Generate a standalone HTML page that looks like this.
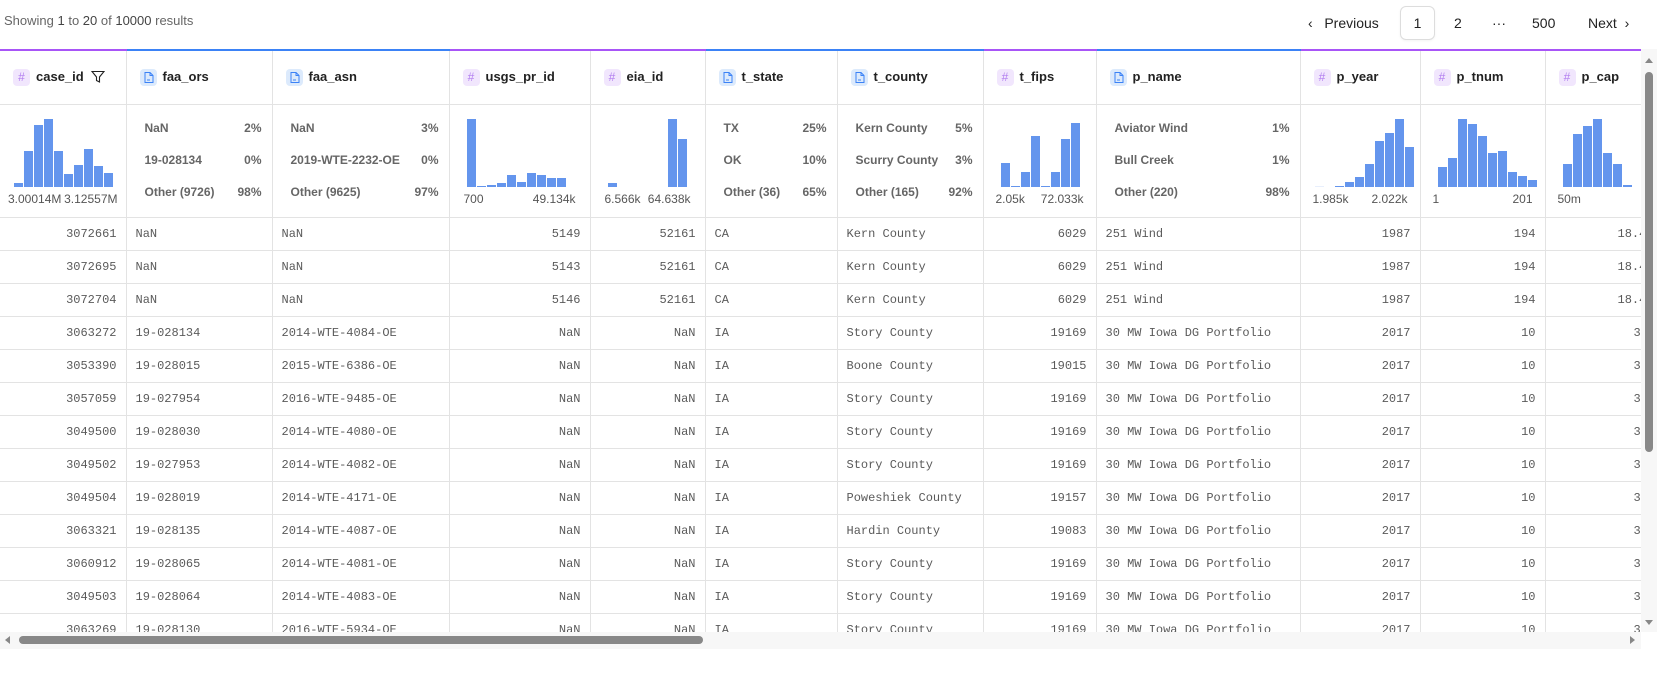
<!DOCTYPE html>
<html><head><meta charset="utf-8"><style>
*{box-sizing:border-box;margin:0;padding:0}
body{width:1657px;height:689px;background:#fff;font-family:"Liberation Sans",sans-serif;position:relative;overflow:hidden;color:#222}
.top{position:absolute;top:13px;left:4px;font-size:13px;color:#666}
.top b{color:#444;font-weight:normal}
.pg{position:absolute;top:0;font-size:14px;color:#222;line-height:46px}
.box{position:absolute;left:1400px;top:6px;width:35px;height:34px;border:1px solid #ddd;border-radius:6px;text-align:center;line-height:32px;font-size:14px;box-shadow:0 1px 2px rgba(0,0,0,.05)}
.wrap{position:absolute;left:0;top:49px;width:1641px;height:583px;overflow:hidden}
table{border-collapse:collapse;table-layout:fixed;width:1665px}
td,th{border-right:1px solid #e3e3e3;border-bottom:1px solid #e3e3e3;overflow:hidden;white-space:nowrap}
th{height:54px;text-align:left;font-size:13px;font-weight:bold;color:#222;padding-left:13px;border-top:2px solid #3b82f6}
th.n{border-top-color:#a855f7}
.ic{display:inline-block;width:17px;height:17px;border-radius:4px;vertical-align:middle;margin-right:6px;text-align:center;line-height:17px;font-size:12px;font-weight:normal}
.ic.h{background:#f1e6fd;color:#b27ef0}
.ic.d{background:#dceafc}
.st td{height:112px;vertical-align:top;position:relative;font-size:12px;font-weight:bold;color:#666}
.cat{padding:16px 10px 0 18px}
.cat div{display:flex;justify-content:space-between;height:32px}
.hist{position:absolute;left:14px;top:12px;height:70px;display:flex;align-items:flex-end;gap:1px}
.hist i{display:block;width:9px;background:#6495ed}
.lab{position:absolute;left:8px;right:8px;top:87px;display:flex;justify-content:space-between;font-weight:normal;color:#555;font-size:12px}
.r td{height:33px;font-family:"Liberation Mono",monospace;font-size:12px;color:#5a5a5a;padding:0 9px}
.r td.num{text-align:right}
.vs{position:absolute;left:1641px;top:49px;width:16px;height:583px;background:#f7f7f7}
.vt{position:absolute;left:1645px;top:72px;width:8px;height:380px;background:#888;border-radius:4px}
.hs{position:absolute;left:0;top:632px;width:1641px;height:17px;background:#f7f7f7}
.ht{position:absolute;left:19px;top:636px;width:684px;height:8px;background:#888;border-radius:4px}
.ar{position:absolute;width:0;height:0}
</style></head><body>
<div class="top">Showing <b>1</b> to <b>20</b> of <b>10000</b> results</div>
<div class="pg" style="left:1308px">‹&nbsp;&nbsp; Previous</div>
<div class="box">1</div>
<div class="pg" style="left:1454px">2</div>
<div class="pg" style="left:1492px">···</div>
<div class="pg" style="left:1532px">500</div>
<div class="pg" style="left:1588px">Next &nbsp;›</div>
<div class="wrap"><table>
<colgroup><col style="width:126px"><col style="width:146px"><col style="width:177px"><col style="width:141px"><col style="width:115px"><col style="width:132px"><col style="width:146px"><col style="width:113px"><col style="width:204px"><col style="width:120px"><col style="width:125px"><col style="width:120px"></colgroup>
<tr>
<th class="n"><span class="ic h">#</span>case_id &nbsp;<svg width="14" height="14" viewBox="0 0 14 14" style="vertical-align:middle"><path d="M1 1.5h12L8.5 7v5l-3-1.5V7z" fill="none" stroke="#222" stroke-width="1.1"/></svg></th>
<th><span class="ic d"><svg width="17" height="17" viewBox="0 0 17 17"><path d="M5 3.5h5l3 3v7H5z M10 3.5v3h3 M7 11h3" fill="none" stroke="#3b82f6" stroke-width="1"/></svg></span>faa_ors</th>
<th><span class="ic d"><svg width="17" height="17" viewBox="0 0 17 17"><path d="M5 3.5h5l3 3v7H5z M10 3.5v3h3 M7 11h3" fill="none" stroke="#3b82f6" stroke-width="1"/></svg></span>faa_asn</th>
<th class="n"><span class="ic h">#</span>usgs_pr_id</th>
<th class="n"><span class="ic h">#</span>eia_id</th>
<th><span class="ic d"><svg width="17" height="17" viewBox="0 0 17 17"><path d="M5 3.5h5l3 3v7H5z M10 3.5v3h3 M7 11h3" fill="none" stroke="#3b82f6" stroke-width="1"/></svg></span>t_state</th>
<th><span class="ic d"><svg width="17" height="17" viewBox="0 0 17 17"><path d="M5 3.5h5l3 3v7H5z M10 3.5v3h3 M7 11h3" fill="none" stroke="#3b82f6" stroke-width="1"/></svg></span>t_county</th>
<th class="n"><span class="ic h">#</span>t_fips</th>
<th><span class="ic d"><svg width="17" height="17" viewBox="0 0 17 17"><path d="M5 3.5h5l3 3v7H5z M10 3.5v3h3 M7 11h3" fill="none" stroke="#3b82f6" stroke-width="1"/></svg></span>p_name</th>
<th class="n"><span class="ic h">#</span>p_year</th>
<th class="n"><span class="ic h">#</span>p_tnum</th>
<th class="n"><span class="ic h">#</span>p_cap</th>
</tr>
<tr class="st">
<td><div class="hist"><i style="height:4px"></i><i style="height:36px"></i><i style="height:62px"></i><i style="height:68px"></i><i style="height:36px"></i><i style="height:13px"></i><i style="height:22px"></i><i style="height:38px"></i><i style="height:21px"></i><i style="height:14px"></i></div><div class="lab"><span>3.00014M</span><span>3.12557M</span></div></td>
<td><div class="cat"><div><span>NaN</span><span>2%</span></div><div><span>19-028134</span><span>0%</span></div><div><span>Other (9726)</span><span>98%</span></div></div></td>
<td><div class="cat"><div><span>NaN</span><span>3%</span></div><div><span>2019-WTE-2232-OE</span><span>0%</span></div><div><span>Other (9625)</span><span>97%</span></div></div></td>
<td><div class="hist" style="left:17px"><i style="height:68px"></i><i style="height:1px"></i><i style="height:2px"></i><i style="height:4px"></i><i style="height:12px"></i><i style="height:5px"></i><i style="height:14px"></i><i style="height:12px"></i><i style="height:9px"></i><i style="height:9px"></i></div><div class="lab" style="left:14px;right:14px"><span>700</span><span>49.134k</span></div></td>
<td><div class="hist" style="left:17px"><i style="height:4px"></i><i style="height:0"></i><i style="height:0"></i><i style="height:0"></i><i style="height:0"></i><i style="height:0"></i><i style="height:68px"></i><i style="height:48px"></i></div><div class="lab" style="left:14px;right:14px"><span>6.566k</span><span>64.638k</span></div></td>
<td><div class="cat"><div><span>TX</span><span>25%</span></div><div><span>OK</span><span>10%</span></div><div><span>Other (36)</span><span>65%</span></div></div></td>
<td><div class="cat"><div><span>Kern County</span><span>5%</span></div><div><span>Scurry County</span><span>3%</span></div><div><span>Other (165)</span><span>92%</span></div></div></td>
<td><div class="hist" style="left:17px"><i style="height:24px"></i><i style="height:1px"></i><i style="height:15px"></i><i style="height:51px"></i><i style="height:1px"></i><i style="height:15px"></i><i style="height:48px"></i><i style="height:64px"></i></div><div class="lab" style="left:12px;right:12px"><span>2.05k</span><span>72.033k</span></div></td>
<td><div class="cat"><div><span>Aviator Wind</span><span>1%</span></div><div><span>Bull Creek</span><span>1%</span></div><div><span>Other (220)</span><span>98%</span></div></div></td>
<td><div class="hist"><i style="height:1px;background:#e8effc"></i><i style="height:0"></i><i style="height:1px"></i><i style="height:5px"></i><i style="height:10px"></i><i style="height:23px"></i><i style="height:46px"></i><i style="height:54px"></i><i style="height:68px"></i><i style="height:40px"></i></div><div class="lab" style="left:12px;right:12px"><span>1.985k</span><span>2.022k</span></div></td>
<td><div class="hist" style="left:17px"><i style="height:20px"></i><i style="height:29px"></i><i style="height:68px"></i><i style="height:63px"></i><i style="height:51px"></i><i style="height:34px"></i><i style="height:36px"></i><i style="height:15px"></i><i style="height:11px"></i><i style="height:7px"></i></div><div class="lab" style="left:12px;right:12px"><span>1</span><span>201</span></div></td>
<td><div class="hist" style="left:17px"><i style="height:23px"></i><i style="height:53px"></i><i style="height:61px"></i><i style="height:68px"></i><i style="height:34px"></i><i style="height:23px"></i><i style="height:2px"></i><i style="height:0"></i><i style="height:0"></i><i style="height:5px"></i></div><div class="lab" style="left:12px;right:-20px"><span>50m</span><span>525.0</span></div></td>
</tr>
</table>
<table id="rows"></table>
</div>
<div class="vs"></div><div class="vt"></div>
<div class="ar" style="left:1645px;top:58px;border:4px solid transparent;border-bottom:5px solid #888;border-top:0"></div>
<div class="ar" style="left:1645px;top:620px;border:4px solid transparent;border-top:5px solid #888;border-bottom:0"></div>
<div class="hs"></div><div class="ht"></div>
<div class="ar" style="left:5px;top:636px;border:4px solid transparent;border-right:5px solid #888;border-left:0"></div>
<div class="ar" style="left:1630px;top:636px;border:4px solid transparent;border-left:5px solid #888;border-right:0"></div>
<script>
var d=[["3072661","NaN","NaN","5149","52161","CA","Kern County","6029","251 Wind","1987","194","18.43"],
["3072695","NaN","NaN","5143","52161","CA","Kern County","6029","251 Wind","1987","194","18.43"],
["3072704","NaN","NaN","5146","52161","CA","Kern County","6029","251 Wind","1987","194","18.43"],
["3063272","19-028134","2014-WTE-4084-OE","NaN","NaN","IA","Story County","19169","30 MW Iowa DG Portfolio","2017","10","30"],
["3053390","19-028015","2015-WTE-6386-OE","NaN","NaN","IA","Boone County","19015","30 MW Iowa DG Portfolio","2017","10","30"],
["3057059","19-027954","2016-WTE-9485-OE","NaN","NaN","IA","Story County","19169","30 MW Iowa DG Portfolio","2017","10","30"],
["3049500","19-028030","2014-WTE-4080-OE","NaN","NaN","IA","Story County","19169","30 MW Iowa DG Portfolio","2017","10","30"],
["3049502","19-027953","2014-WTE-4082-OE","NaN","NaN","IA","Story County","19169","30 MW Iowa DG Portfolio","2017","10","30"],
["3049504","19-028019","2014-WTE-4171-OE","NaN","NaN","IA","Poweshiek County","19157","30 MW Iowa DG Portfolio","2017","10","30"],
["3063321","19-028135","2014-WTE-4087-OE","NaN","NaN","IA","Hardin County","19083","30 MW Iowa DG Portfolio","2017","10","30"],
["3060912","19-028065","2014-WTE-4081-OE","NaN","NaN","IA","Story County","19169","30 MW Iowa DG Portfolio","2017","10","30"],
["3049503","19-028064","2014-WTE-4083-OE","NaN","NaN","IA","Story County","19169","30 MW Iowa DG Portfolio","2017","10","30"],
["3063269","19-028130","2016-WTE-5934-OE","NaN","NaN","IA","Story County","19169","30 MW Iowa DG Portfolio","2017","10","30"]];
var num=[1,0,0,1,1,0,0,1,0,1,1,1];
var w=[126,146,177,141,115,132,146,113,204,120,125,120];
var h='<colgroup>'+w.map(function(x){return '<col style="width:'+x+'px">'}).join('')+'</colgroup>';
d.forEach(function(r){h+='<tr class="r">'+r.map(function(c,i){return '<td'+(num[i]?' class="num"':'')+(i==11?' style="text-align:left;padding-left:'+(c.length>2?72:88)+'px"':'')+'>'+c+'</td>'}).join('')+'</tr>'});
document.getElementById('rows').innerHTML=h;
</script>
</body></html>
